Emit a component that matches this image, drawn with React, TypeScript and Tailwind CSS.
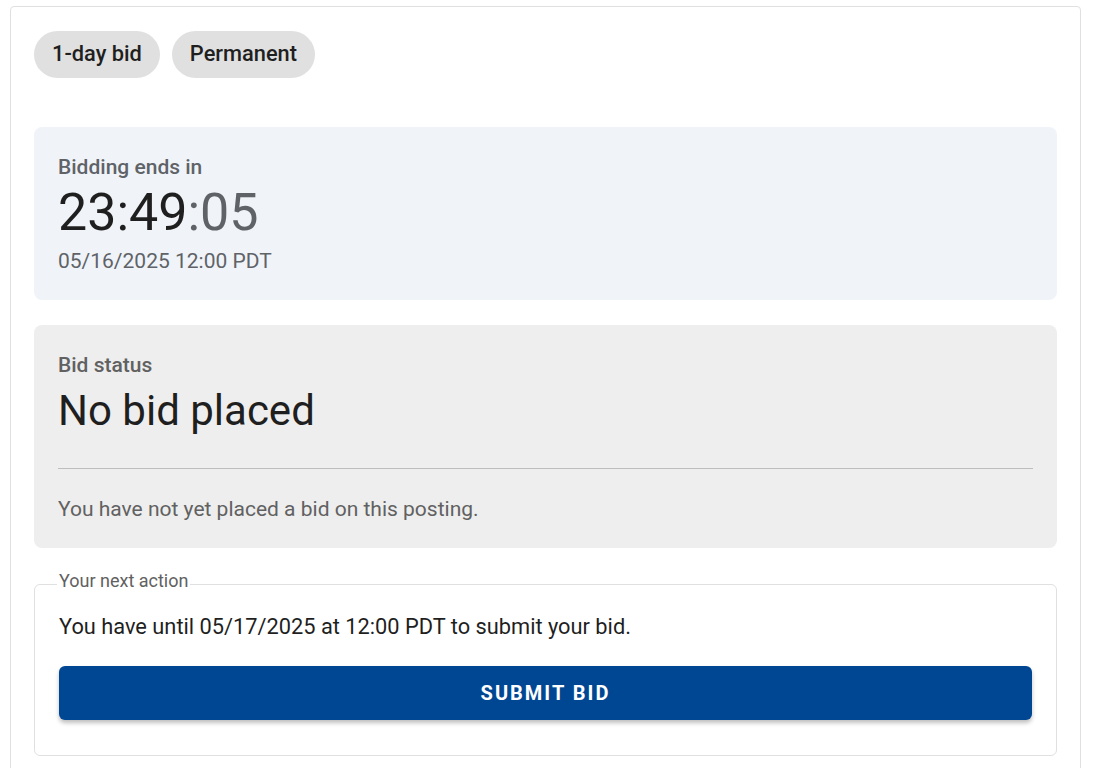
import React from 'react';

const chips = ['1-day bid', 'Permanent'];

export default function App() {
  return (
    <div className="min-h-screen bg-white pt-[6px] pl-[10px] pr-[12px] font-['Roboto',sans-serif]">
      <div className="rounded border border-[#e0e0e0] px-[23px] pt-[24px] pb-[24px]">
        {/* Posting type chips */}
        <div className="flex gap-3">
          {chips.map((c) => (
            <span
              key={c}
              className="flex h-[47px] items-center rounded-full bg-[#e0e0e0] px-[18px] text-[21.8px] font-medium text-[#1f1f1f]"
            >
              {c}
            </span>
          ))}
        </div>

        {/* Countdown */}
        <div className="mt-[49px] rounded-lg bg-[#f0f4f9] px-6 pt-[24px] pb-[23px]">
          <div className="text-[21px] leading-[32px] font-medium text-[#5f6368]">Bidding ends in</div>
          <div className="text-[52px] leading-[60px] text-[#1f1f1f]">
            23:49<span className="text-[#5f6368]">:05</span>
          </div>
          <div className="mt-[2px] text-[21px] leading-[32px] text-[#5f6368]">05/16/2025 12:00 PDT</div>
        </div>

        {/* Bid status */}
        <div className="mt-[25px] rounded-lg bg-[#eeeeee] px-6 pt-[24px] pb-[23px]">
          <div className="text-[21px] leading-[32px] font-medium text-[#616161]">Bid status</div>
          <div className="mt-[4px] text-[42px] leading-[52px] text-[#1f1f1f]">No bid placed</div>
          <div className="mt-[31px] border-t border-[#bdbdbd]" />
          <div className="mt-[24px] text-[21px] leading-[32px] text-[#616161]">
            You have not yet placed a bid on this posting.
          </div>
        </div>

        {/* Next action */}
        <fieldset className="mt-[24px] rounded-md border border-[#e0e0e0] px-6 pt-[15px] pb-[35px]">
          <legend className="-ml-[2px] px-[2px] pb-[6px] text-[18px] leading-[18px] text-[#616161]">
            Your next action
          </legend>
          <p className="text-[21.8px] leading-[32px] text-[#1f1f1f]">
            You have until 05/17/2025 at 12:00 PDT to submit your bid.
          </p>
          <button className="mt-[23px] h-[54px] w-full rounded-md bg-[#004793] text-[20px] font-bold tracking-[0.1em] text-white uppercase shadow-[0_3px_4px_rgba(0,0,0,0.25)]">
            Submit bid
          </button>
        </fieldset>
      </div>
    </div>
  );
}
